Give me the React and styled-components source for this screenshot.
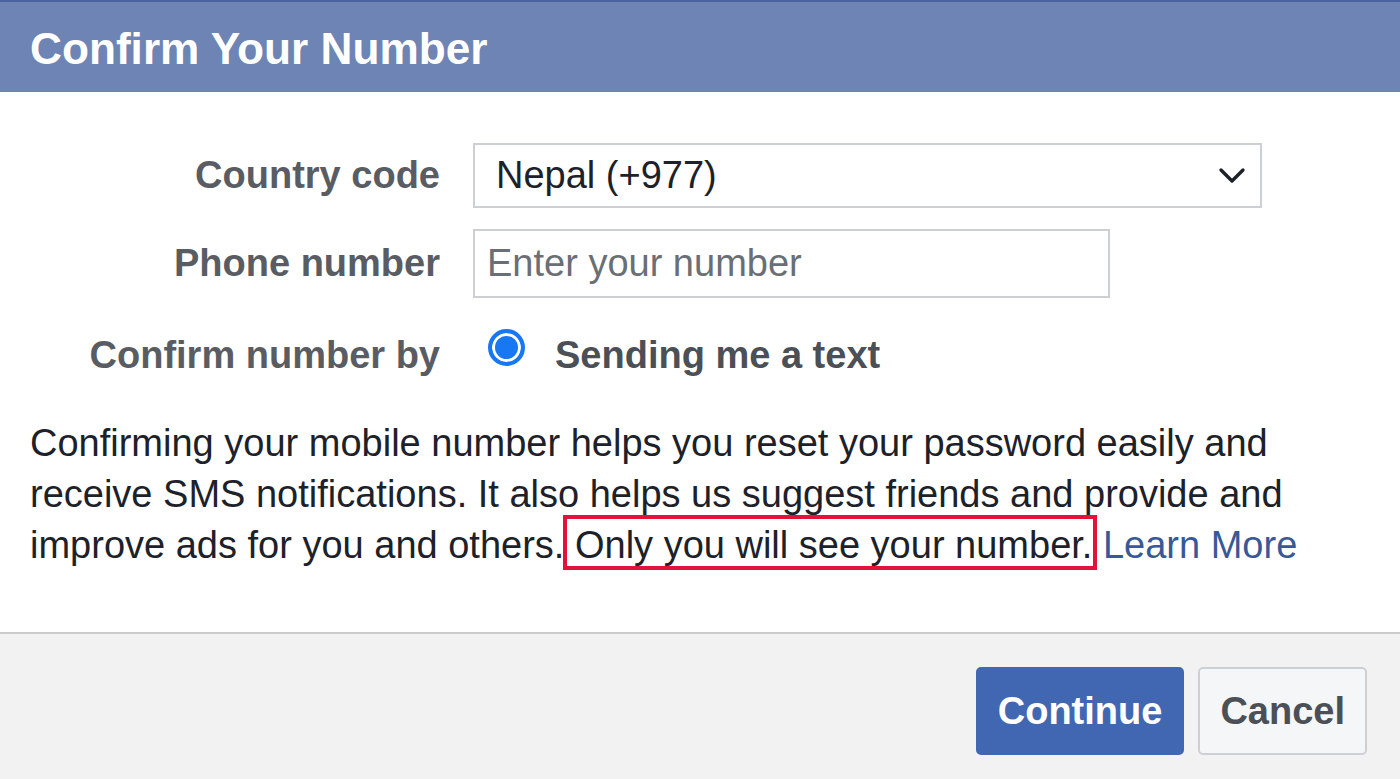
import React from 'react'
import styled, { createGlobalStyle } from 'styled-components'

const GlobalStyle = createGlobalStyle`
    html, body {
        margin: 0;
        padding: 0;
        background: #ffffff;
    }
    body {
        font-family: "Liberation Sans", Arial, Helvetica, sans-serif;
    }
`

const App = () => {
    return (
        <>
            <GlobalStyle />
            <Dialog>
                <Header>
                    <Title>Confirm Your Number</Title>
                </Header>
                <Body>
                    <Form>
                        <Row $mt={51} $h={65}>
                            <Label>Country code</Label>
                            <Select>
                                <SelectValue>Nepal (+977)</SelectValue>
                                <svg width="28" height="18" viewBox="0 0 28 18">
                                    <path d="M3 3 L14 14 L25 3" fill="none" stroke="#1d2129" strokeWidth="3.4" strokeLinecap="round" strokeLinejoin="round" />
                                </svg>
                            </Select>
                        </Row>
                        <Row $mt={21} $h={69}>
                            <Label>Phone number</Label>
                            <Input placeholder="Enter your number" />
                        </Row>
                        <Row $mt={31} $h={50}>
                            <Label>Confirm number by</Label>
                            <Option>
                                <Radio />
                                <OptionText>Sending me a text</OptionText>
                            </Option>
                        </Row>
                    </Form>
                    <Text>
                        Confirming your mobile number helps you reset your password easily and receive SMS
                        notifications. It also helps us suggest friends and provide and improve ads for you
                        and others. <Marked>Only you will see your number.</Marked> <Link href="#">Learn More</Link>
                    </Text>
                </Body>
                <Footer>
                    <Button $primary>Continue</Button>
                    <Button>Cancel</Button>
                </Footer>
            </Dialog>
        </>
    )
}

export default App


const Dialog = styled.div`
    width: 1400px;
    height: 779px;
    display: flex;
    flex-direction: column;
    overflow: hidden;
`

const Header = styled.div`
    height: 92px;
    border-top: 2px solid #4b64a0;
    background-color: #6d84b4;
    display: flex;
    align-items: center;
    padding: 4px 30px 0;
    box-sizing: border-box;
    flex-shrink: 0;
`

const Title = styled.h1`
    margin: 0;
    font-size: 44.2px;
    font-weight: bold;
    color: #ffffff;
    line-height: 1;
`

const Body = styled.div`
    background: #ffffff;
    padding: 0 30px;
    flex: 1;
    border-bottom: 2px solid #cbcbcb;
`

const Form = styled.div`
    display: flex;
    flex-direction: column;
`

const Row = styled.div`
    display: grid;
    grid-template-columns: 410px 1fr;
    column-gap: 33px;
    align-items: center;
    margin-top: ${(props) => props.$mt}px;
    height: ${(props) => props.$h}px;
`

const Label = styled.div`
    text-align: right;
    font-size: 38px;
    font-weight: bold;
    color: #595d63;
    white-space: nowrap;
`

const Select = styled.div`
    width: 789px;
    height: 65px;
    box-sizing: border-box;
    border: 2px solid #ccd0d5;
    display: flex;
    align-items: center;
    justify-content: space-between;
    padding: 0 14px 0 21px;
    background: #fff;
`

const SelectValue = styled.span`
    font-size: 38px;
    color: #1d2129;
`

const Input = styled.input`
    width: 637px;
    height: 69px;
    box-sizing: border-box;
    border: 2px solid #ccd0d5;
    padding: 0 12px;
    font-family: "Liberation Sans", Arial, sans-serif;
    font-size: 38px;
    color: #1d2129;
    outline: none;

    &::placeholder {
        color: #6a6e75;
    }
`

const Option = styled.div`
    display: flex;
    align-items: center;
    gap: 30px;
    padding-left: 15px;
`

const Radio = styled.span`
    width: 37px;
    height: 37px;
    box-sizing: border-box;
    border-radius: 50%;
    border: 4px solid #1877f2;
    background: #1877f2;
    box-shadow: inset 0 0 0 3px #ffffff;
    margin-bottom: 16px;
    flex-shrink: 0;
`

const OptionText = styled.span`
    font-size: 38px;
    font-weight: bold;
    color: #4b4f56;
`

const Text = styled.p`
    margin: 39px 0 0;
    font-size: 38px;
    line-height: 51px;
    color: #1d2129;
`

const Marked = styled.span`
    position: relative;

    &::after {
        content: '';
        position: absolute;
        top: -9px;
        bottom: -4px;
        left: -12px;
        right: -5px;
        border: 4px solid #e3113b;
        pointer-events: none;
    }
`

const Link = styled.a`
    color: #385898;
    text-decoration: none;
`

const Footer = styled.div`
    height: 145px;
    flex-shrink: 0;
    background: #f2f2f2;
    display: flex;
    justify-content: flex-end;
    align-items: flex-start;
    gap: 14px;
    padding: 33px 33px 0 0;
    box-sizing: border-box;
`

const Button = styled.button`
    height: 88px;
    padding: 0 20px;
    border-radius: 5px;
    font-family: "Liberation Sans", Arial, sans-serif;
    font-size: 38px;
    font-weight: bold;
    border: 2px solid ${(props) => (props.$primary ? '#4267b2' : '#ccd0d5')};
    background: ${(props) => (props.$primary ? '#4267b2' : '#f5f6f7')};
    color: ${(props) => (props.$primary ? '#ffffff' : '#4b4f56')};
`
